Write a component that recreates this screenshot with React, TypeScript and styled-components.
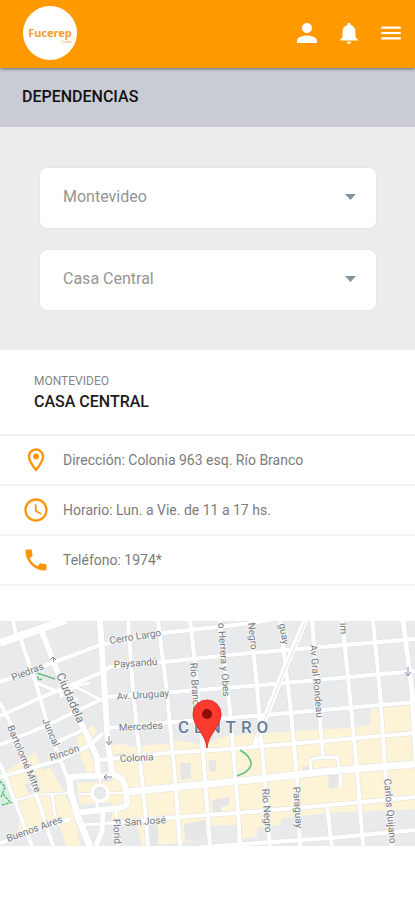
import React, { useState } from "react";
import styled, { createGlobalStyle } from "styled-components";
import {
  MdPerson,
  MdNotifications,
  MdMenu,
  MdAccessTime,
  MdPhone,
  MdOutlineLocationOn,
} from "react-icons/md";

const GlobalStyle = createGlobalStyle`
  * { box-sizing: border-box; }
  body {
    margin: 0;
    background: #fff;
    font-family: Roboto, "Liberation Sans", sans-serif;
  }
`;

const Page = styled.div`
  display: flex;
  flex-direction: column;
`;

const Header = styled.header`
  display: flex;
  align-items: center;
  justify-content: space-between;
  height: 68px;
  padding: 0 10px 2px 22px;
  background: #ff9900;
  box-shadow: 0 1px 3px rgba(0, 0, 0, 0.5);
  z-index: 1;
`;

const LogoLink = styled.a`
  display: flex;
`;

const Actions = styled.nav`
  display: flex;
  align-items: center;
  gap: 14px;
`;

const IconButton = styled.button`
  display: flex;
  align-items: center;
  justify-content: center;
  width: 28px;
  height: 32px;
  padding: 0;
  border: 0;
  background: none;
  color: #fff;
  cursor: pointer;
  svg { flex: none; }
`;

const PageTitle = styled.h1`
  margin: 0;
  padding: 0 22px 1px;
  background: #c9ccd4;
  color: #111;
  font-size: 16px;
  font-weight: 500;
  line-height: 58px;
`;

const Filters = styled.section`
  display: flex;
  flex-direction: column;
  gap: 22px;
  padding: 41px 39px 40px 40px;
  background: #ececec;
`;

const SelectBox = styled.div`
  display: grid;
  align-items: center;
  > * { grid-area: 1 / 1; }
`;

const Select = styled.select`
  appearance: none;
  width: 100%;
  height: 60px;
  padding: 0 48px 4px 23px;
  border: 0;
  border-radius: 7px;
  background: #fff;
  box-shadow: 0 0 2px rgba(0, 0, 0, 0.1);
  color: #959595;
  font: 400 16px Roboto, sans-serif;
`;

const Caret = styled.svg`
  justify-self: end;
  margin: 0 20px 2px 0;
  pointer-events: none;
`;

const Branch = styled.header`
  padding: 22px 34px 20px;
  border-bottom: 2px solid #efefef;
`;

const Region = styled.p`
  margin: 0;
  color: #858585;
  font-size: 12px;
  line-height: 18px;
`;

const BranchName = styled.h2`
  margin: 0;
  color: #1c1c1c;
  font-size: 16px;
  font-weight: 500;
  line-height: 24px;
`;

const Details = styled.ul`
  margin: 0;
  padding: 0;
  list-style: none;
`;

const Detail = styled.li`
  display: flex;
  align-items: center;
  gap: 13px;
  height: 50px;
  padding: 0 22px;
  border-bottom: 2px solid #f3f3f3;
  color: #7c7c7c;
  font-size: 14px;
  svg { color: #ff9408; flex: none; }
`;

const MapView = styled.figure`
  margin: 35px 0 0;
  svg { display: block; width: 100%; }
`;

const roads: { d: string; w: number }[] = [
  { d: "M0 61L52 42L100 24L163 12L217 6L250 2L275 -2", w: 4 },
  { d: "M0 95L40 77L100 52L110 46L163 41L250 32L415 18", w: 4 },
  { d: "M0 124L43 106L100 79L107 76L173 71L250 65L415 50", w: 4 },
  { d: "M57 121L83 109M108 107L173 101L230 97L415 81", w: 4 },
  { d: "M0 156L60 139L90 124L103 112", w: 4 },
  { d: "M97 139L110 138L167 132L230 128L415 112", w: 4 },
  { d: "M70 198L0 222", w: 4 },
  { d: "M10 181L36 174L70 172", w: 2 },
  { d: "M112 202L167 197L250 191L363 181L415 176", w: 4 },
  { d: "M150 231L230 224L330 217L415 209", w: 4 },
  { d: "M13 0L16 13", w: 4 },
  { d: "M20 16L37 66L50 112L67 156", w: 4 },
  { d: "M0 82L14 109L24 143L37 176L53 225", w: 4 },
  { d: "M0 142L17 186L32 225", w: 4 },
  { d: "M128 0L133 69L140 139L145 189L148 225", w: 4 },
  { d: "M158 0L167 72L175 156L180 225", w: 4 },
  { d: "M190 0L195 42L203 132L210 225", w: 4 },
  { d: "M220 0L230 89L238 189L240 225", w: 4 },
  { d: "M250 0L257 66L263 139L270 225", w: 4 },
  { d: "M280 0L290 82L297 156L300 225", w: 4 },
  { d: "M312 0L322 122L323 138", w: 4 },
  { d: "M342 0L348 56L357 149L363 225", w: 4 },
  { d: "M373 0L380 72L385 146L392 225", w: 4 },
  { d: "M327 186L332 225", w: 4 },
  { d: "M311 151L310 139L316 137L337 136L340 149L341 167", w: 3 },
  { d: "M60 76L78 64L90 62M76 66L101 79M37 62L78 79", w: 3 },
  { d: "M82 204L112 202M97 191V181M116 190L118 225M52 174L55 195", w: 3 },
  { d: "M100 157V165M80 173H92M108 172H124", w: 2 },
  { d: "M305 0L280 59L255 124", w: 6 },
  { d: "M403 0L412 69L416 140", w: 5 },
  { d: "M0 22L43 7L66 -1", w: 8 },
  { d: "M42 11L58 52L83 106L97 136L98 154", w: 6 },
  { d: "M100 0L105 76L108 122L112 154", w: 6 },
  { d: "M69 156L71 172L78 196L90 225", w: 7 },
  { d: "M103 190L102 210L96 225", w: 5 },
  { d: "M67 156L115 154Q123 156 125 165L127 182Q127 186 118 187L76 192", w: 6 },
  { d: "M127 171L167 167L250 159L320 151L415 143", w: 7 },
];

const commercial = [
  "M77 117L93 104L97 110L86 124L98 150L88 154L78 130Z",
  "M105 126L124 122L129 126L172 122L173 119L200 123L228 115L290 110L350 107L370 104L371 88L415 84V188L330 192L282 197L280 204L258 206L257 215L242 217V204L190 205L191 221L142 225L136 201L112 199L112 150Z",
  "M0 154L36 131L42 150L50 146L64 171L75 195L80 225H66L60 205L18 211L20 184L0 184Z",
  "M77 162L119 160L121 180L80 184Z",
];

const parcels = [
  "M180 142H191V157L181 159Z",
  "M208 139H216V150L210 151Z",
  "M145 205L158 202V225H148Z",
  "M184 203L205 199V216L185 220Z",
  "M212 179L229 176V184L221 186V192L213 193Z",
  "M302 146L309 144V152L303 153Z",
  "M328 152L338 152V166L329 168Z",
  "M115 133L125 132V136L115 138Z",
  "M25 163L39 158V171L28 173Z",
];

const labels: { t: string; x: number; y: number; r?: number; s?: number }[] = [
  { t: "Cerro Largo", x: 110, y: 23, r: -9 },
  { t: "Paysandú", x: 114, y: 47, r: -4 },
  { t: "Av. Uruguay", x: 117, y: 79, r: -4 },
  { t: "Mercedes", x: 119, y: 110, r: -3 },
  { t: "Colonia", x: 120, y: 141, r: -3 },
  { t: "San José", x: 125, y: 205, r: -4 },
  { t: "Piedras", x: 13, y: 60, r: -21 },
  { t: "Ciudadela", x: 56, y: 54, r: 66, s: 12 },
  { t: "Juncal", x: 42, y: 99, r: 67 },
  { t: "Rincón", x: 51, y: 140, r: -19 },
  { t: "Bartolomé Mitre", x: 7, y: 106, r: 67 },
  { t: "Buenos Aires", x: 8, y: 221, r: -20 },
  { t: "Florid", x: 113, y: 198, r: 87 },
  { t: "Río Branco", x: 190, y: 42, r: 86 },
  { t: "o Herrera y Obes", x: 218, y: 2, r: 86 },
  { t: "Negro", x: 248, y: 2, r: 84 },
  { t: "guay", x: 279, y: 3, r: 80 },
  { t: "Av Gral Rondeau", x: 310, y: 24, r: 85 },
  { t: "im", x: 340, y: 2, r: 88 },
  { t: "Río Negro", x: 262, y: 168, r: 86 },
  { t: "Paraguay", x: 293, y: 166, r: 86 },
  { t: "Carlos Quijano", x: 384, y: 158, r: 85 },
];

function CityMap() {
  return (
    <svg viewBox="0 0 415 225" role="img" aria-label="Mapa de Casa Central">
      <rect width="415" height="225" fill="#e9eaeb" />
      {commercial.map((d) => <path key={d} d={d} fill="#fdf3d6" />)}
      {parcels.map((d) => <path key={d} d={d} fill="#e6e6e6" />)}
      <path d="M0 158L7 162L13 182L0 184Z" fill="#d9efe1" />
      <g fill="none" stroke="#dfe0e2" strokeLinejoin="round">
        {roads.map(({ d, w }) => <path key={d} d={d} strokeWidth={w + 1} />)}
      </g>
      <g fill="none" stroke="#fff" strokeLinejoin="round">
        {roads.map(({ d, w }) => <path key={d} d={d} strokeWidth={w} />)}
      </g>
      <circle cx="100" cy="172" r="8" fill="#e8e9eb" stroke="#fff" strokeWidth="3" />
      <path d="M305 2L281 58L257 118" stroke="#e2e3e5" strokeWidth="1" fill="none" />
      <g fill="none" stroke="#62bd87" strokeWidth="1.5">
        <path d="M37 52L55 58M38 55Q37 60 42 58" />
        <path d="M240 129Q252 136 251 144Q249 151 237 155" />
        <path d="M0 160L5 166L1 176M2 184L13 181M3 173L10 181" strokeDasharray="3 1" />
      </g>
      <g fill="none" stroke="#85898f" strokeWidth="1">
        <path d="M54 41L53 36L50 39M53 36L56 39" />
        <path d="M109 115V123M106 120L109 124L112 120" />
        <path d="M104 156H112M107 153L104 156L107 159" />
        <path d="M408 46V55M405 51L408 55L411 51" stroke="#8b8fba" />
      </g>
      <g
        fontFamily="Roboto, sans-serif"
        fill="#757a80"
        stroke="#f7f7f7"
        strokeWidth="2"
        strokeLinejoin="round"
        paintOrder="stroke"
      >
        {labels.map(({ t, x, y, r = 0, s = 10 }) => (
          <text key={t} fontSize={s} transform={`translate(${x} ${y}) rotate(${r})`}>{t}</text>
        ))}
        <text x="178" y="112" fontSize="17" fontWeight="500" letterSpacing="5" fill="#66809c">
          CENTRO
        </text>
      </g>
      <path
        d="M207 127C206 113 193 106 193 93A14 14 0 0 1 221 93C221 106 208 113 207 127Z"
        fill="#fb3b30"
        stroke="#df3027"
        strokeWidth="1"
      />
      <circle cx="207" cy="93" r="5" fill="#8f0b09" />
    </svg>
  );
}

function Logo() {
  return (
    <svg width="56" height="56" viewBox="0 0 56 56" role="img" aria-label="Fucerep">
      <circle cx="28" cy="28" r="27" fill="#fff" />
      <text x="28" y="32" textAnchor="middle" fontFamily="Noto Sans, sans-serif" fontSize="11" fontWeight="700" fill="#f6a02c">
        Fucerep
      </text>
      <text x="39" y="38" fontFamily="Noto Sans, sans-serif" fontSize="4" fill="#f6a02c">
        Cuida
      </text>
    </svg>
  );
}

function Dropdown({ label, options }: { label: string; options: string[] }) {
  const [value, setValue] = useState(options[0]);
  return (
    <SelectBox>
      <Select aria-label={label} value={value} onChange={(e) => setValue(e.target.value)}>
        {options.map((o) => <option key={o}>{o}</option>)}
      </Select>
      <Caret width="11" height="6" viewBox="0 0 11 6" aria-hidden="true">
        <path d="M0 0H11L5.5 6Z" fill="#84949f" />
      </Caret>
    </SelectBox>
  );
}

export default function App() {
  return (
    <Page>
      <GlobalStyle />
      <Header>
        <LogoLink href="#"><Logo /></LogoLink>
        <Actions>
          <IconButton aria-label="Perfil"><MdPerson size={30} /></IconButton>
          <IconButton aria-label="Notificaciones"><MdNotifications size={26} /></IconButton>
          <IconButton aria-label="Menú"><MdMenu size={26} /></IconButton>
        </Actions>
      </Header>
      <main>
        <PageTitle>DEPENDENCIAS</PageTitle>
        <Filters>
          <Dropdown label="Departamento" options={["Montevideo"]} />
          <Dropdown label="Dependencia" options={["Casa Central"]} />
        </Filters>
        <Branch>
          <Region>MONTEVIDEO</Region>
          <BranchName>CASA CENTRAL</BranchName>
        </Branch>
        <Details>
          <Detail><MdOutlineLocationOn size={28} />Dirección: Colonia 963 esq. Río Branco</Detail>
          <Detail><MdAccessTime size={28} />Horario: Lun. a Vie. de 11 a 17 hs.</Detail>
          <Detail><MdPhone size={28} />Teléfono: 1974*</Detail>
        </Details>
        <MapView><CityMap /></MapView>
      </main>
    </Page>
  );
}
